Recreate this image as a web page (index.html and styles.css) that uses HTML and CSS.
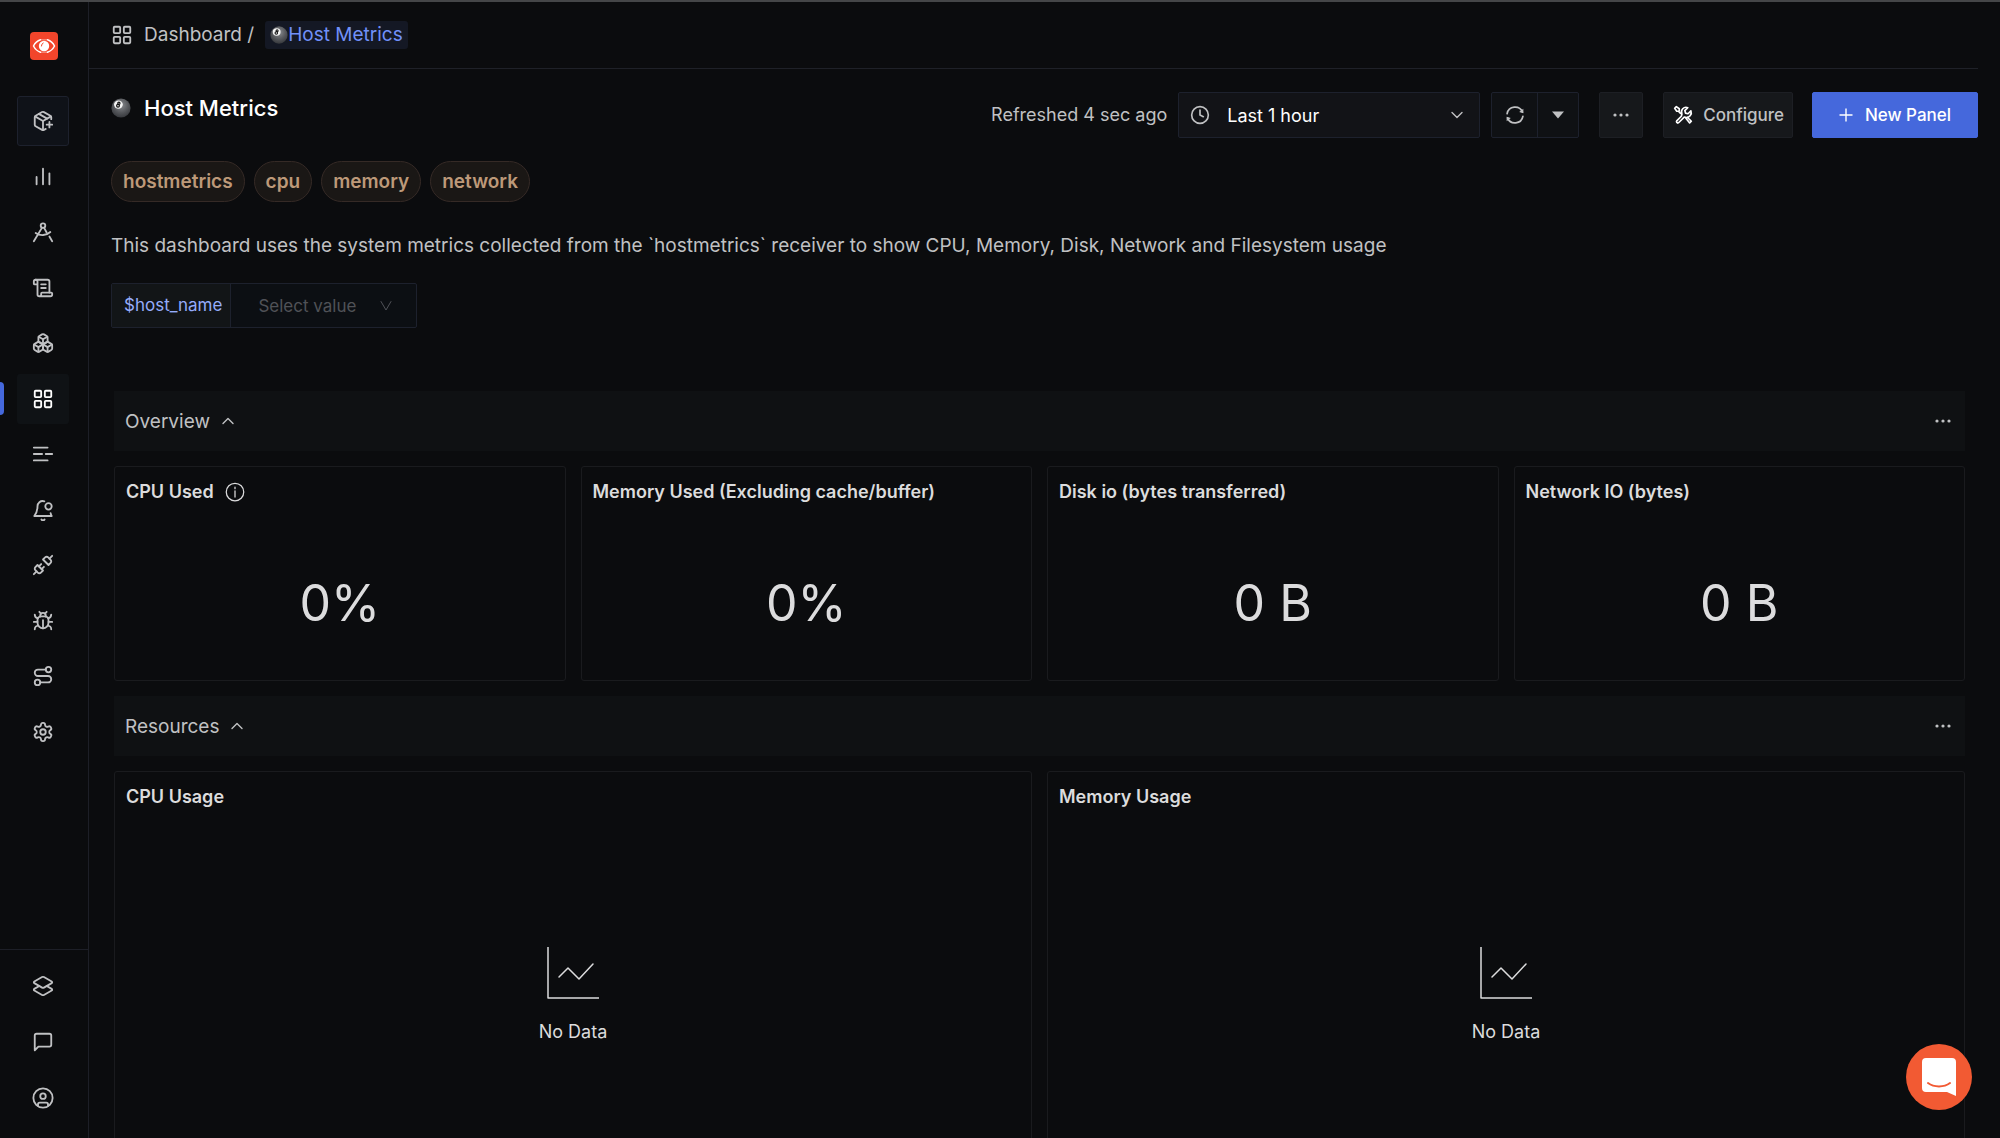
FILE: index.html
```html
<!DOCTYPE html>
<html lang="en">
<head>
  <meta charset="UTF-8" />
  <meta name="viewport" content="width=device-width, initial-scale=1.0"/>
  <title>Host Metrics</title>
  <link rel="stylesheet" href="styles.css">
</head>
<body>
  <!-- shared shapes -->
  <svg class="defs" width="0" height="0" aria-hidden="true">
    <defs>
      <radialGradient id="ballFill" cx="50%" cy="35%" r="65%">
        <stop offset="0" stop-color="#8a8c90"/>
        <stop offset="0.6" stop-color="#55575b"/>
        <stop offset="1" stop-color="#37393d"/>
      </radialGradient>
      <symbol id="ball" viewBox="0 0 20 20">
        <circle cx="10" cy="10" r="9.6" fill="url(#ballFill)"/>
        <ellipse cx="7.4" cy="6.6" rx="4.4" ry="4.1" fill="#f4f4f4"/>
        <g fill="none" stroke="#111" stroke-width="1.2">
          <circle cx="7.9" cy="5.3" r="1.1"/>
          <circle cx="7" cy="7.7" r="1.4"/>
        </g>
      </symbol>
      <symbol id="grid" viewBox="0 0 24 24">
        <rect x="3" y="3" width="7" height="7" rx="1"/>
        <rect x="14" y="3" width="7" height="7" rx="1"/>
        <rect x="14" y="14" width="7" height="7" rx="1"/>
        <rect x="3" y="14" width="7" height="7" rx="1"/>
      </symbol>
      <symbol id="dots" viewBox="0 0 16 16">
        <g fill="currentColor" stroke="none">
          <circle cx="2" cy="8" r="1.6"/>
          <circle cx="8" cy="8" r="1.6"/>
          <circle cx="14" cy="8" r="1.6"/>
        </g>
      </symbol>
      <symbol id="chart" viewBox="0 0 52 52">
        <path d="M1 0v51h51"/>
        <path d="M12 30l9-9 11 11 14-15"/>
      </symbol>
    </defs>
  </svg>

  <div class="app">
    <aside class="sidebar">
      <a class="logo" href="#" aria-label="Home">
        <svg width="28" height="28" viewBox="0 0 28 28">
          <rect width="28" height="28" rx="4" fill="#f2452b"/>
          <path d="M10.500 7.800C7.500 8.800 5 11 3.500 14c1.500 3 4 5.200 7 6.200M17.500 7.800c3 1 5.500 3.200 7 6.200-1.500 3-4 5.200-7 6.200" fill="none" stroke="#fff" stroke-width="1.500" stroke-linecap="round"/>
          <path d="M10.500 7.800h7M10.500 20.200h7" stroke="#fff" stroke-width="0.800" opacity="0.600"/>
          <circle cx="14" cy="14" r="5.200" fill="#fff"/>
          <path d="M13.200 11a3.200 3.200 0 0 0-1.800 3" fill="none" stroke="#f2452b" stroke-width="1" stroke-linecap="round"/>
        </svg>
      </a>
      <nav class="nav">
        <a class="nav-item boxed" href="#" aria-label="Get started">
          <svg class="icon" viewBox="0 0 24 24"><path d="M16 16h6"/><path d="M19 13v6"/><path d="M21 10V8a2 2 0 0 0-1-1.730l-7-4a2 2 0 0 0-2 0l-7 4A2 2 0 0 0 3 8v8a2 2 0 0 0 1 1.730l7 4a2 2 0 0 0 2 0l2-1.140"/><path d="m7.500 4.270 9 5.150"/><path d="M3.290 7 12 12l8.710-5"/><path d="M12 22V12"/></svg>
        </a>
        <a class="nav-item" href="#" aria-label="Services">
          <svg class="icon" viewBox="0 0 24 24"><path d="M5 20v-8M12 20V3M19 20V8"/></svg>
        </a>
        <a class="nav-item" href="#" aria-label="Traces">
          <svg class="icon" viewBox="0 0 24 24"><circle cx="12" cy="5" r="2.500"/><path d="m10.800 7.500L2 22"/><path d="m13.200 7.500 2.800 5"/><path d="m19 17 3 5"/><path d="M4 13c5 3.500 11.500 3 16-1"/></svg>
        </a>
        <a class="nav-item" href="#" aria-label="Logs">
          <svg class="icon" viewBox="0 0 24 24"><path d="M15 12h-5"/><path d="M15 8h-5"/><path d="M19 17V5a2 2 0 0 0-2-2H4"/><path d="M8 21h12a2 2 0 0 0 2-2v-1a1 1 0 0 0-1-1H11a1 1 0 0 0-1 1v1a2 2 0 1 1-4 0V5a2 2 0 1 0-4 0v2a1 1 0 0 0 1 1h3"/></svg>
        </a>
        <a class="nav-item" href="#" aria-label="Infrastructure">
          <svg class="icon" viewBox="0 0 24 24"><path d="M2.970 12.920A2 2 0 0 0 2 14.630v3.240a2 2 0 0 0 .97 1.710l3 1.800a2 2 0 0 0 2.060 0L12 19v-5.500l-5-3z"/><path d="m7 16.500-4.740-2.850M7 16.500l5-3M7 16.500v5.170"/><path d="M12 13.500V19l3.970 2.380a2 2 0 0 0 2.060 0l3-1.800a2 2 0 0 0 .97-1.710v-3.240a2 2 0 0 0-.97-1.710L17 10.500z"/><path d="m17 16.500-5-3M17 16.500l4.740-2.850M17 16.500v5.170"/><path d="M7.970 4.420A2 2 0 0 0 7 6.130v4.370l5 3 5-3V6.130a2 2 0 0 0-.97-1.710l-3-1.800a2 2 0 0 0-2.060 0z"/><path d="M12 8 7.260 5.150M12 8l4.740-2.850M12 13.500V8"/></svg>
        </a>
        <a class="nav-item active" href="#" aria-label="Dashboards">
          <svg class="icon"><use href="#grid"/></svg>
        </a>
        <a class="nav-item" href="#" aria-label="Messaging queues">
          <svg class="icon" viewBox="0 0 24 24"><path d="M2 5h15M2 12h9M15 12h7M2 19h15"/></svg>
        </a>
        <a class="nav-item" href="#" aria-label="Alerts">
          <svg class="icon" viewBox="0 0 24 24"><circle cx="18" cy="8" r="3.500"/><path d="M13.500 2.500C9 1.300 6 4.500 6 8c0 6-1.500 8-3.500 10.500h19c-.7-1-1-1.800-1.200-3"/><path d="M10.300 22.300a2 2 0 0 0 3.400 0"/></svg>
        </a>
        <a class="nav-item" href="#" aria-label="Integrations">
          <svg class="icon" viewBox="0 0 24 24"><path d="m19 5 3-3"/><path d="m2 22 3-3"/><path d="M6.300 20.300a2.400 2.400 0 0 0 3.400 0L12 18l-6-6-2.300 2.300a2.400 2.400 0 0 0 0 3.400Z"/><path d="m7.500 13.500 2.500-2.500"/><path d="m10.500 16.500 2.500-2.500"/><path d="m12 6 6 6 2.300-2.300a2.400 2.400 0 0 0 0-3.400l-2.600-2.600a2.400 2.400 0 0 0-3.400 0Z"/></svg>
        </a>
        <a class="nav-item" href="#" aria-label="Exceptions">
          <svg class="icon" viewBox="0 0 24 24"><path d="m8 2 1.880 1.880"/><path d="M14.120 3.880 16 2"/><path d="M9 7.130v-1a3 3 0 1 1 6 0v1"/><path d="M12 20c-3.300 0-6-2.700-6-6v-3a4 4 0 0 1 4-4h4a4 4 0 0 1 4 4v3c0 3.300-2.700 6-6 6"/><path d="M12 20v-9"/><path d="M6.530 9C4.600 8.800 3 7.100 3 5"/><path d="M6 13H2"/><path d="M3 21c0-2.100 1.700-3.900 3.800-4"/><path d="M20.970 5c0 2.100-1.600 3.800-3.500 4"/><path d="M22 13h-4"/><path d="M17.200 17c2.100.1 3.800 1.900 3.800 4"/></svg>
        </a>
        <a class="nav-item" href="#" aria-label="Service map">
          <svg class="icon" viewBox="0 0 24 24"><circle cx="6" cy="19" r="3"/><path d="M9 19h8.500a3.500 3.500 0 0 0 0-7h-11a3.500 3.500 0 0 1 0-7H15"/><circle cx="18" cy="5" r="3"/></svg>
        </a>
        <a class="nav-item" href="#" aria-label="Settings">
          <svg class="icon" viewBox="0 0 24 24"><path d="M12.220 2h-.44a2 2 0 0 0-2 2v.18a2 2 0 0 1-1 1.730l-.43.25a2 2 0 0 1-2 0l-.15-.08a2 2 0 0 0-2.730.73l-.22.38a2 2 0 0 0 .73 2.730l.15.1a2 2 0 0 1 1 1.720v.51a2 2 0 0 1-1 1.740l-.15.09a2 2 0 0 0-.73 2.730l.22.38a2 2 0 0 0 2.730.73l.15-.08a2 2 0 0 1 2 0l.43.25a2 2 0 0 1 1 1.730V20a2 2 0 0 0 2 2h.44a2 2 0 0 0 2-2v-.18a2 2 0 0 1 1-1.730l.43-.25a2 2 0 0 1 2 0l.15.08a2 2 0 0 0 2.730-.73l.22-.39a2 2 0 0 0-.73-2.730l-.15-.08a2 2 0 0 1-1-1.740v-.5a2 2 0 0 1 1-1.740l.15-.09a2 2 0 0 0 .73-2.730l-.22-.38a2 2 0 0 0-2.730-.73l-.15.08a2 2 0 0 1-2 0l-.43-.25a2 2 0 0 1-1-1.730V4a2 2 0 0 0-2-2z"/><circle cx="12" cy="12" r="3"/></svg>
        </a>
      </nav>
      <nav class="nav-bottom">
        <a class="nav-item" href="#" aria-label="Workspace">
          <svg class="icon" viewBox="0 0 24 24"><path d="m16.020 12 5.480 3.130a1 1 0 0 1 0 1.740L13 21.740a2 2 0 0 1-2 0l-8.500-4.870a1 1 0 0 1 0-1.740L7.980 12"/><path d="M13 13.740a2 2 0 0 1-2 0L2.500 8.870a1 1 0 0 1 0-1.740L11 2.260a2 2 0 0 1 2 0l8.500 4.870a1 1 0 0 1 0 1.740Z"/></svg>
        </a>
        <a class="nav-item" href="#" aria-label="Support">
          <svg class="icon" viewBox="0 0 24 24"><path d="M21 15a2 2 0 0 1-2 2H7l-4 4V5a2 2 0 0 1 2-2h14a2 2 0 0 1 2 2z"/></svg>
        </a>
        <a class="nav-item" href="#" aria-label="Account">
          <svg class="icon" viewBox="0 0 24 24"><circle cx="12" cy="12" r="10.500"/><circle cx="12" cy="10" r="3"/><path d="M6.500 20.500V19a2 2 0 0 1 2-2h7a2 2 0 0 1 2 2v1.500"/></svg>
        </a>
      </nav>
    </aside>

    <main class="main">
      <div class="breadcrumb">
        <svg class="icon"><use href="#grid"/></svg>
        <a class="crumb" href="#">Dashboard /</a>
        <a class="crumb current" href="#"><svg class="crumb-ball"><use href="#ball"/></svg>Host Metrics</a>
      </div>

      <header class="page-head">
        <h1 class="title"><svg class="title-ball"><use href="#ball"/></svg>Host Metrics</h1>
        <div class="toolbar">
          <span class="refreshed">Refreshed 4 sec ago</span>
          <div class="time-picker">
            <svg class="icon" viewBox="0 0 24 24"><circle cx="12" cy="12" r="10"/><path d="M12 6v6l4 2"/></svg>
            <select aria-label="Time range">
              <option>Last 1 hour</option>
              <option>Last 6 hours</option>
              <option>Last 1 day</option>
            </select>
            <svg class="chevron" viewBox="0 0 12 12"><path d="M1 3.500l5 5 5-5"/></svg>
          </div>
          <div class="refresh">
            <button type="button" aria-label="Refresh">
              <svg class="icon" viewBox="0 0 24 24"><path d="M2.500 10.500A9.700 9.700 0 0 1 21 8.500M21.500 13.500A9.700 9.700 0 0 1 3 15.500"/><path d="M22 4.500v5.500l-5-1.500zM2 19.500V14l5 1.500z" fill="currentColor" stroke="none"/></svg>
            </button>
            <button type="button" aria-label="Auto refresh options">
              <svg width="12" height="8" viewBox="0 0 12 8"><path d="M0 0.500h12L6 7.500z" fill="currentColor"/></svg>
            </button>
          </div>
          <button class="btn more" type="button" aria-label="More options"><svg class="dots"><use href="#dots"/></svg></button>
          <button class="btn configure" type="button">
            <svg class="icon" viewBox="0 0 24 24"><path d="M10 13.500 4.500 19a1.800 1.800 0 0 0 0 2 1.800 1.800 0 0 0 2.500 0L13.500 14.500c2.500 1 5.500.5 7-1.500 1.500-1.800 1.800-4 1-6l-3.500 3.500-3-.8-.8-3L17.700 3.200c-2-.8-4.500-.3-6 1.300-1.700 1.800-2 4.500-1 6.500z"/><path d="M9 10 6.500 7.500H4.500L2 4l2-2 3.500 2.500v2M15.500 16l4.500 5.500 2-2-4.500-4.500"/></svg>
            Configure
          </button>
          <button class="btn primary" type="button">
            <svg width="14" height="14" viewBox="0 0 14 14"><path d="M7 0.500v13M0.500 7h13" stroke="currentColor" stroke-width="1.400"/></svg>
            New Panel
          </button>
        </div>
      </header>

      <div class="tags">
        <span class="tag">hostmetrics</span>
        <span class="tag">cpu</span>
        <span class="tag">memory</span>
        <span class="tag">network</span>
      </div>

      <p class="description">This dashboard uses the system metrics collected from the `hostmetrics` receiver to show CPU, Memory, Disk, Network and Filesystem usage</p>

      <div class="variable">
        <label for="hostName">$host_name</label>
        <div class="variable-value">
          <select id="hostName">
            <option>Select value</option>
          </select>
          <svg class="chevron" viewBox="0 0 12 12"><path d="M1 1.500l5 8.500 5-8.500"/></svg>
        </div>
      </div>

      <div class="board">
        <div class="section-row">
          <button class="section-toggle" type="button">Overview <svg class="chevron" viewBox="0 0 12 12"><path d="M1 8.500l5-5 5 5"/></svg></button>
          <button class="section-more" type="button" aria-label="Overview options"><svg class="dots"><use href="#dots"/></svg></button>
        </div>

        <section class="panel stat">
          <h2>CPU Used <svg class="icon info" viewBox="0 0 24 24"><circle cx="12" cy="12" r="10.500"/><path d="M12 10.500V18M12 6v2"/></svg></h2>
          <div class="value">0%</div>
        </section>
        <section class="panel stat">
          <h2>Memory Used (Excluding cache/buffer)</h2>
          <div class="value">0%</div>
        </section>
        <section class="panel stat">
          <h2>Disk io (bytes transferred)</h2>
          <div class="value">0 B</div>
        </section>
        <section class="panel stat">
          <h2>Network IO (bytes)</h2>
          <div class="value">0 B</div>
        </section>

        <div class="section-row">
          <button class="section-toggle" type="button">Resources <svg class="chevron" viewBox="0 0 12 12"><path d="M1 8.500l5-5 5 5"/></svg></button>
          <button class="section-more" type="button" aria-label="Resources options"><svg class="dots"><use href="#dots"/></svg></button>
        </div>

        <section class="panel graph">
          <h2>CPU Usage</h2>
          <div class="no-data">
            <svg class="chart"><use href="#chart"/></svg>
            No Data
          </div>
        </section>
        <section class="panel graph">
          <h2>Memory Usage</h2>
          <div class="no-data">
            <svg class="chart"><use href="#chart"/></svg>
            No Data
          </div>
        </section>
      </div>
    </main>
  </div>

  <button class="chat" type="button" aria-label="Open chat">
    <svg width="34" height="38" viewBox="0 0 34 38">
      <path d="M4 0h26a4 4 0 0 1 4 4v34l-9-4H4a4 4 0 0 1-4-4V4a4 4 0 0 1 4-4z" fill="#fff"/>
      <path d="M6 25c6 4.500 16 4.500 22 0" fill="none" stroke="#f25a33" stroke-width="2" stroke-linecap="round"/>
    </svg>
  </button>
</body>
</html>
```
FILE: styles.css
```css
* {
  box-sizing: border-box;
}
body {
  margin: 0;
  background: #0b0c0e;
  color: #c0c1c3;
  font-family: Inter, "Liberation Sans", sans-serif;
  font-size: 19px;
  line-height: 24px;
}
a {
  color: inherit;
  text-decoration: none;
}
button, select {
  font-family: inherit;
  color: inherit;
  background: none;
  border: none;
  padding: 0;
  cursor: pointer;
}
select {
  appearance: none;
  outline: none;
}
.defs {
  position: absolute;
}
.icon, .chevron, .chart {
  fill: none;
  stroke: currentColor;
  stroke-width: 2;
  stroke-linecap: round;
  stroke-linejoin: round;
  flex: none;
}
.icon {
  width: 22px;
  height: 22px;
}
.chevron {
  width: 12px;
  height: 12px;
  stroke-width: 1.4;
}
.dots {
  width: 16px;
  height: 16px;
}

/* Layout */
.app {
  display: grid;
  grid-template-columns: 89px 1fr;
  height: 100vh;
  overflow: hidden;
  border-top: 2px solid #454648;
}
.sidebar {
  display: flex;
  flex-direction: column;
  border-right: 1px solid #1d1f27;
  min-height: 0;
}
.main {
  min-width: 0;
  overflow: hidden;
}

/* Sidebar */
.logo {
  height: 28px;
  margin: 30px 0 36px 30px;
}
.logo svg {
  display: block;
}
.nav {
  display: flex;
  flex-direction: column;
  justify-content: space-between;
  height: 661px;
}
.nav-item {
  position: relative;
  display: flex;
  align-items: center;
  justify-content: center;
  width: 52px;
  height: 50px;
  margin-left: 17px;
  border-radius: 3px;
}
.nav-item.boxed {
  background: #0f1218;
  border: 1px solid #1d212d;
}
.nav-item.active {
  background: #0f1215;
  color: #fff;
}
.nav-item.active::before {
  content: "";
  position: absolute;
  left: -17px;
  top: 8px;
  width: 4px;
  height: 33px;
  border-radius: 0 4px 4px 0;
  background: #4568dc;
}
.nav-bottom {
  display: flex;
  flex-direction: column;
  gap: 6px;
  margin-top: auto;
  padding: 11px 0 15px;
  border-top: 1px solid #1d1f27;
}

/* Breadcrumb */
.breadcrumb {
  display: flex;
  align-items: center;
  height: 67px;
  margin-right: 22px;
  padding-left: 22px;
  border-bottom: 1px solid #1f2128;
}
.crumb {
  margin-left: 11px;
}
.current {
  display: flex;
  align-items: center;
  height: 28px;
  padding: 0 5px;
  border-radius: 3px;
  background: #141824;
  color: #7190f9;
}
.crumb-ball {
  width: 18px;
  height: 18px;
}

/* Page header */
.page-head {
  display: flex;
  justify-content: space-between;
  padding: 23px 22px 0;
}
.title {
  display: flex;
  align-items: center;
  gap: 13px;
  height: 32px;
  margin: 0;
  color: #fff;
  font-size: 22px;
  font-weight: 500;
}
.title-ball {
  width: 20px;
  height: 20px;
}
.toolbar {
  display: flex;
  align-items: center;
}
.refreshed {
  margin-right: 11px;
  font-size: 18px;
}
.time-picker {
  display: flex;
  align-items: center;
  width: 302px;
  height: 46px;
  margin-right: 11px;
  padding: 0 16px 0 11px;
  border: 1px solid #1d212d;
  border-radius: 2px;
  background: #121317;
}
.time-picker .icon, .refresh .icon, .configure .icon {
  width: 20px;
  height: 20px;
}
.time-picker select {
  flex: 1;
  margin-left: 17px;
  color: #fff;
  font-size: 18px;
}
.refresh {
  display: flex;
  height: 46px;
  margin-right: 20px;
  border: 1px solid #1d212d;
  border-radius: 2px;
  background: #0f1114;
}
.refresh button {
  display: flex;
  align-items: center;
  justify-content: center;
  width: 45px;
}
.refresh button + button {
  width: 41px;
  border-left: 1px solid #1d212d;
}
.btn {
  display: flex;
  align-items: center;
  justify-content: center;
  height: 46px;
  border: 1px solid #1d1f24;
  border-radius: 2px;
  background: #16181b;
  font-size: 17px;
  font-weight: 500;
}
.more {
  width: 44px;
  margin-right: 20px;
}
.configure {
  gap: 10px;
  margin-right: 19px;
  padding: 0 8px 0 9px;
}
.configure .icon {
  color: #fff;
}
.primary {
  gap: 12px;
  width: 166px;
  border-color: #4568dc;
  background: #4568dc;
  color: #fff;
}

/* Tags, description and variables */
.tags {
  display: flex;
  gap: 9px;
  padding: 23px 22px 0;
}
.tag {
  height: 41px;
  padding: 0 11px;
  border: 1px solid #352a26;
  border-radius: 21px;
  background: #1a1715;
  color: #bd9979;
  font-weight: 600;
  line-height: 39px;
}
.description {
  margin: 32px 22px 25px;
}
.variable {
  display: flex;
  width: 306px;
  height: 45px;
  margin: 0 22px;
  border: 1px solid #1d212d;
  border-radius: 2px;
  background: #0c0f13;
  font-size: 17px;
}
.variable label {
  padding: 0 8px 0 12px;
  border-right: 1px solid #1d212d;
  background: #121517;
  color: #95acfb;
  line-height: 43px;
}
.variable-value {
  display: flex;
  flex: 1;
  align-items: center;
  padding: 0 24px 0 27px;
  color: #505257;
}
.variable select {
  flex: 1;
  font-size: 17px;
}
.variable .chevron {
  stroke-width: 1;
}

/* Board */
.board {
  display: grid;
  grid-template-columns: repeat(4, 1fr);
  gap: 15px;
  margin: 63px 35px 0 25px;
}
.section-row {
  grid-column: 1 / -1;
  display: flex;
  align-items: center;
  justify-content: space-between;
  height: 60px;
  padding: 0 14px 0 11px;
  background: #0f1113;
}
.section-toggle {
  display: flex;
  align-items: center;
  gap: 12px;
  font-size: 19px;
}
.section-more {
  display: flex;
}
.panel {
  display: flex;
  flex-direction: column;
  min-width: 0;
  border: 1px solid #1a1b1e;
  border-radius: 3px;
}
.panel h2 {
  display: flex;
  align-items: center;
  gap: 11px;
  height: 50px;
  margin: 0;
  padding-left: 11px;
  color: #dcdcdd;
  font-size: 18px;
  font-weight: 600;
}
.info {
  width: 20px;
  height: 20px;
  stroke-width: 1.5;
}
.stat {
  height: 215px;
}
.value {
  padding-top: 54px;
  color: #dcdcdd;
  font-size: 50px;
  line-height: 64px;
  text-align: center;
}
.graph {
  grid-column: span 2;
  height: 500px;
}
.no-data {
  display: flex;
  flex-direction: column;
  align-items: center;
  gap: 21px;
  padding-top: 125px;
  color: #dcdcdd;
  font-size: 18px;
}
.chart {
  width: 52px;
  height: 52px;
  stroke-width: 1.5;
}

/* Chat launcher */
.chat {
  position: fixed;
  right: 28px;
  bottom: 28px;
  display: flex;
  align-items: center;
  justify-content: center;
  width: 66px;
  height: 66px;
  border-radius: 50%;
  background: #f25a33;
}
```
